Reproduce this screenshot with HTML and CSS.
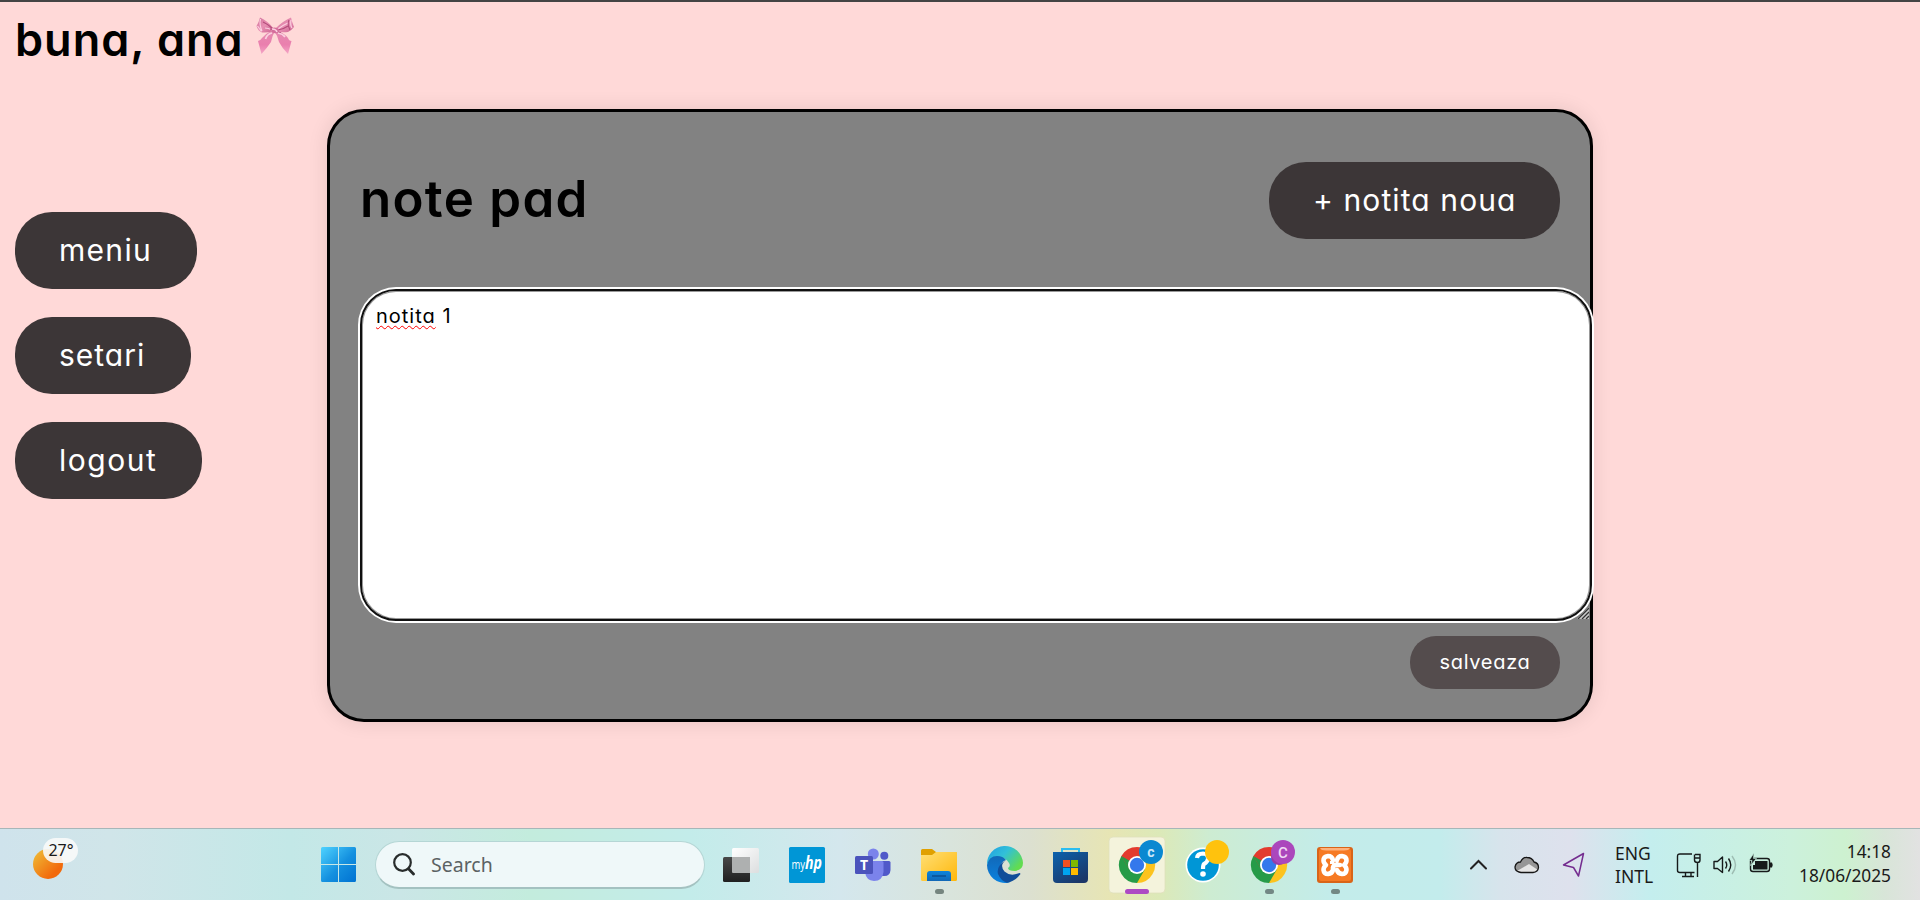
FILE: index.html
```html
<!DOCTYPE html>
<html lang="ro">
<head>
<meta charset="utf-8">
<title>note pad</title>
<link rel="stylesheet" href="styles.css">
</head>
<body>
<div class="page">
  <header class="greeting">
    <h1 class="hello">buna, ana</h1>
    <svg class="bow" viewBox="0 0 38 38">
      <defs>
        <linearGradient id="bowA" x1="0" y1="0" x2="1" y2="1"><stop offset="0" stop-color="#d07098"/><stop offset=".5" stop-color="#e88fb3"/><stop offset="1" stop-color="#cc6691"/></linearGradient>
        <linearGradient id="bowB" x1="0" y1="0" x2="0" y2="1"><stop offset="0" stop-color="#e58bb0"/><stop offset=".6" stop-color="#ea7fae"/><stop offset="1" stop-color="#f4a6c6"/></linearGradient>
      </defs>
      <path d="M15 14 Q9 17 6 21 Q4 24 2 24 L5.500 37 Q11 31 15 25 Q16 19 19 14Z" fill="url(#bowB)"/>
      <path d="M22 14 Q29 17 32 21 Q33 24 35.500 24 L32 37 Q26 31 23 25 Q22 19 18 14Z" fill="url(#bowB)"/>
      <path d="M17 11 Q12 4 4 0.500 Q3 5 0.500 9 Q2 14 6 15.500 Q12 16 17 14Z" fill="url(#bowA)"/>
      <path d="M20 11 Q27 4 35 0.500 Q36 5 38 10 Q35 14 32 15 Q25 16 20 14Z" fill="url(#bowA)"/>
      <path d="M4.500 2 Q3 7 6 14 M1.500 9 Q3 11 5.500 14.500 M9 11 Q12 11 16 13 M22 12 Q27 8 33 5.500 M35 3 Q34 8 36 11" fill="none" stroke="#fbcfe0" stroke-width="1.200"/>
      <path d="M7 5 Q12 7 17 12 M22 13 Q28 12 32 9 M14 12 L25 16 M33 3 Q31 7 34 13" fill="none" stroke="#b34c7a" stroke-width="1.100"/>
      <path d="M15.500 11 Q20 9.500 23 12 L21 16 Q18 17 16 15Z" fill="#d56f9c"/>
      <path d="M16 12 Q20 12 21 15 M16 16 Q11 17 9.500 22 M22 16 Q27 17 29 20" fill="none" stroke="#fbd0e0" stroke-width="1.700"/>
    </svg>
  </header>
  <div class="workspace">
    <nav class="menu">
      <button class="pill menu-meniu">meniu</button>
      <button class="pill menu-setari">setari</button>
      <button class="pill menu-logout">logout</button>
    </nav>
    <main class="card">
      <div class="card-head">
        <h2 class="card-title">note pad</h2>
        <button class="pill add-note">+ notita noua</button>
      </div>
      <div class="note">
        <svg class="grip" viewBox="0 0 12 12"><path d="M0 12L12 0V12Z" fill="#c9c9c9"/><path d="M1 12L12 1M5 12L12 5M9 12L12 9" stroke="#333" stroke-width="1.3"/></svg>
        <div class="note-text"><span class="misspelt">notita</span> 1</div>
      </div>
      <div class="card-foot"><button class="save">salveaza</button></div>
    </main>
  </div>
</div>
<footer class="taskbar">
  <div class="weather"><span class="sun"></span><span class="temp">27°</span></div>
  <svg class="start" viewBox="0 0 35 35">
    <defs><linearGradient id="win" x1="0" y1="0" x2="35" y2="35" gradientUnits="userSpaceOnUse"><stop offset="0" stop-color="#4fd3ff"/><stop offset=".55" stop-color="#1490df"/><stop offset="1" stop-color="#0072d2"/></linearGradient></defs>
    <path d="M1.5 0H17V17H0V1.5A1.5 1.5 0 0 1 1.500 0ZM18 0H33.500A1.500 1.500 0 0 1 35 1.500V17H18ZM0 18H17V35H1.500A1.500 1.500 0 0 1 0 33.500ZM18 18H35V33.500A1.500 1.500 0 0 1 33.500 35H18Z" fill="url(#win)"/>
  </svg>
  <div class="search">
    <svg class="lens" viewBox="0 0 22 23"><circle cx="9.500" cy="9.500" r="8.300" fill="none" stroke="#282c2c" stroke-width="2.200"/><path d="M15.500 15.800L20.500 21" stroke="#282c2c" stroke-width="2.800" stroke-linecap="round"/></svg>
    <span class="search-label">Search</span>
  </div>
  <div class="apps">
    <svg class="app" viewBox="0 0 66 72">
      <defs><linearGradient id="tvd" x1="0" y1="0" x2="0" y2="1"><stop offset="0" stop-color="#484848"/><stop offset="1" stop-color="#202020"/></linearGradient><linearGradient id="tvl" x1="0" y1="0" x2="1" y2="1"><stop offset="0" stop-color="#fff"/><stop offset="1" stop-color="#dcdedf"/></linearGradient></defs>
      <rect x="24" y="19" width="27" height="25" rx="1.500" fill="url(#tvl)"/>
      <rect x="15" y="28" width="27" height="25" rx="1.500" fill="url(#tvd)"/>
      <path d="M24 28H42V44H25Q24 44 24 43Z" fill="#aeb0b0"/>
    </svg>
    <svg class="app" viewBox="0 0 66 72">
      <rect x="15" y="18" width="36" height="36" rx="1.500" fill="#0096d6"/>
      <text x="17.500" y="39.500" class="hp-my" textLength="13.500" lengthAdjust="spacingAndGlyphs">my</text>
      <text x="31" y="40" class="hp-hp" textLength="17" lengthAdjust="spacingAndGlyphs">hp</text>
    </svg>
    <svg class="app" viewBox="0 0 66 72">
      <circle cx="44.300" cy="26.700" r="4" fill="#5059c9"/><path d="M40 32H49Q50.500 32 50.500 33.500V41Q50 47 44.500 47H40Z" fill="#5059c9"/>
      <circle cx="33.300" cy="25" r="5.500" fill="#7b83eb"/><path d="M25 32H42Q43.500 32 43.500 33.500V43Q42.500 52 34 52Q26 51.500 25 43Z" fill="#7b83eb"/>
      <rect x="15" y="27" width="18" height="18" rx="1.500" fill="#4b53bc"/><text x="24" y="41" class="teams-t">T</text>
    </svg>
    <svg class="app" viewBox="0 0 66 72">
      <defs><linearGradient id="fold" x1="0" y1="0" x2="1" y2="1"><stop offset="0" stop-color="#ffdf75"/><stop offset="1" stop-color="#ffb70a"/></linearGradient><linearGradient id="foldB" x1="0" y1="0" x2="0" y2="1"><stop offset="0" stop-color="#0d85dc"/><stop offset="1" stop-color="#1268b6"/></linearGradient></defs>
      <path d="M15 21.500Q15 20 16.500 20H26L30 23H49.500Q51 23 51 25V30H15Z" fill="#e0a000"/>
      <path d="M15 26H26L30 23H50Q51 23 51 24.500V50.500Q51 52 49.500 52H16.500Q15 52 15 50.500Z" fill="url(#fold)"/>
      <path d="M21 52V45Q21 42 24 42H42Q45 42 45 45V52Z" fill="url(#foldB)"/><path d="M26 47H40" stroke="#0b4f92" stroke-width="1.500"/>
      <rect x="29" y="60" width="9" height="5" rx="2.500" fill="#75857f"/>
    </svg>
    <svg class="app" viewBox="0 0 66 72">
      <defs><linearGradient id="edT" x1="0" y1="0" x2="1" y2=".6"><stop offset="0" stop-color="#1f9de4"/><stop offset=".5" stop-color="#32c0d8"/><stop offset="1" stop-color="#62dc50"/></linearGradient><linearGradient id="edL" x1="0" y1="0" x2="0" y2="1"><stop offset="0" stop-color="#1168b8"/><stop offset="1" stop-color="#0b82df"/></linearGradient></defs>
      <path d="M15 36A18 18 0 0 1 51 34Q51 41 43 42Q36 42 36 39Q39 37 37 34Q34 28 25 28Q18 28 15 36Z" fill="url(#edT)"/>
      <path d="M15 36Q17 27 25 27Q31 27 34 31Q28 33 28 40Q29 48 37 51Q40 53 36 53.700A18 18 0 0 1 15 36Z" fill="url(#edL)"/>
      <path d="M34 31Q24 37 26 45Q29 52 35 53.800Q43 52.500 48.500 45Q48 43.500 46 44.500Q38 47.500 32.500 42.500Q27 36 34 31Z" fill="#104d99"/>
    </svg>
    <svg class="app" viewBox="0 0 66 72">
      <defs><linearGradient id="store" x1="0" y1="0" x2=".7" y2="1"><stop offset="0" stop-color="#0b62ad"/><stop offset="1" stop-color="#1c3768"/></linearGradient></defs>
      <path d="M24 26V20H41V26" fill="none" stroke="#2bbdf0" stroke-width="2"/>
      <path d="M15 23H50V50Q50 54 46 54H19Q15 54 15 50Z" fill="url(#store)"/>
      <path d="M25 31h7v7h-7z" fill="#f25022"/><path d="M33 31h7v7h-7z" fill="#7fba00"/><path d="M25 39h7v7h-7z" fill="#00a4ef"/><path d="M33 39h7v7h-7z" fill="#ffb900"/>
    </svg>
    <svg class="app" viewBox="0 0 66 72">
      <rect x="5" y="8" width="56" height="56" rx="4" fill="#f4f3dc" stroke="#dfe0bb" stroke-width=".8"/>
      <g id="chrome"><path d="M33 36L17.400 27A18 18 0 0 1 48.600 27Z" fill="#e33b2e"/><path d="M33 36L48.600 27A18 18 0 0 1 33 54Z" fill="#fcc31e"/><path d="M33 36L40.800 40.500L33 54A18 18 0 0 1 17.400 27Z" fill="#269b48"/><path d="M33 27H48.600L40.800 40.500Z" fill="#fcc31e"/><path d="M17.400 27H48.600L33 27.500L25 40Z" fill="#e33b2e"/><path d="M17.400 27L25.200 40.500L33 36Z" fill="#269b48"/><circle cx="33" cy="36" r="9" fill="#fff"/><circle cx="33" cy="36" r="7.200" fill="#3478ec"/></g>
      <circle cx="47" cy="23" r="12" fill="#0a88d1"/><text x="47" y="27.500" class="badge-small">c</text>
      <rect x="21" y="60" width="24" height="5" rx="2.500" fill="#ad4ac4"/>
    </svg>
    <svg class="app" viewBox="0 0 66 72">
      <circle cx="33" cy="36" r="17.500" fill="#fff"/><circle cx="33" cy="36" r="15.800" fill="#0096d6"/>
      <path d="M27 29Q27.500 24.500 33 24.500Q38.500 25 38 30Q37.500 33 34 35Q33 36 33 40" fill="none" stroke="#fff" stroke-width="4.200"/><circle cx="33" cy="45" r="2.800" fill="#fff"/>
      <circle cx="47" cy="23" r="12" fill="#ffc20d"/>
    </svg>
    <svg class="app" viewBox="0 0 66 72">
      <use href="#chrome"/><circle cx="43" cy="28" r="8" fill="#963ca8"/><circle cx="47" cy="23" r="12" fill="#ab47bc"/><text x="47" y="28.500" class="badge-big">C</text>
      <rect x="29" y="60" width="9" height="5" rx="2.500" fill="#738884"/>
    </svg>
    <svg class="app" viewBox="0 0 66 72">
      <rect x="15" y="18" width="36" height="36" rx="3" fill="#d96418"/><rect x="17" y="20" width="32" height="32" rx="2" fill="#f67a24"/><path d="M18 19H48Q47 21.500 42 21.500H24Q19 21.500 18 19Z" fill="#ffb27d"/>
      <path d="M31 31Q30 27 26 27Q21.500 27.500 21.500 31.500Q21.500 34 24 36Q21.500 38 21.500 41Q22 45 26 45Q30 44.500 31 41V38.500Q31.500 36 34 36H38M35 31Q36 27 40 27Q44.500 27.500 44.500 31.500Q44.500 34 42 36Q44.500 38 44.500 41Q44 45 40 45Q36 44.500 35 41" fill="none" stroke="#fff" stroke-width="4.600" stroke-linecap="round" stroke-linejoin="round"/>
      <path d="M31 31V33.500H28M35 31V34" fill="none" stroke="#fff" stroke-width="3"/>
      <rect x="29" y="60" width="9" height="5" rx="2.500" fill="#738884"/>
    </svg>
  </div>
  <svg class="tray" viewBox="0 0 130 72" fill="none">
    <path d="M6 39.500L13.500 32L21 39.500" stroke="#222" stroke-width="2" stroke-linecap="round"/>
    <g transform="translate(4 0)">
      <path d="M50 43Q46 42 46 38Q47 33 51.500 33Q54 28 58 28.500Q63 28.500 65 33Q69.500 34 69.500 38.500Q69 43 64 43.500H52Z" fill="#969696"/>
      <path d="M48 42L60 35L69 41Q67 43.500 64 43.500H52Z" fill="#e5e5e5"/>
      <path d="M50 43Q46 42 46 38Q47 33 51.500 33Q54 28 58 28.500Q63 28.500 65 33Q69.500 34 69.500 38.500Q69 43 64 43.500H52Z" stroke="#161616" stroke-width="1.300"/>
      <path d="M114.500 24.500L94.500 36L104.500 38.500L109.500 47Z" stroke="#742c8f" stroke-width="1.500" stroke-linejoin="round"/>
    </g>
  </svg>
  <div class="lang"><span>ENG</span><span>INTL</span></div>
  <svg class="system" viewBox="0 0 100 72" fill="none" stroke="#161a1a" stroke-width="1.400">
    <path d="M17 25H5Q2.500 25 2.500 27.500V41.500Q2.500 43.500 5 43.500H19.500M7 47.500H19M10.500 44V47M16 44V47M22.500 34V48M20 25.500H25V31Q25 33.500 22.500 33.500Q19.500 33.500 19.500 31V25.500M20 29H25"/>
    <path d="M39 32.500H42.500L47.500 28V43.500L42.500 39.500H39Z" stroke-linejoin="round"/><path d="M50.500 32.500Q53 36 50.500 39.500M53.500 29.500Q58 36 53.500 42.500"/><path d="M57 27Q64 36 57 45" stroke="#9ebdb3"/>
    <rect x="75.500" y="29.500" width="19" height="13" rx="2.500"/><path d="M80 32H92.500V40.500H78V36H80Z" fill="#161a1a" stroke="none"/><path d="M95 33.500H97Q98.500 36 97 38.500H95Z" fill="#161a1a" stroke="none"/><path d="M79 24L74 31.500H77L75.500 36.500L81.500 29.500H78.500Z" fill="#161a1a" stroke="#c9efdf" stroke-width=".7"/>
  </svg>
  <div class="clock"><span>14:18</span><span>18/06/2025</span></div>
</footer>
</body>
</html>
```
FILE: styles.css
```css
* { box-sizing: border-box; }
body {
  margin: 0;
  width: 1920px;
  height: 900px;
  overflow: hidden;
  display: flex;
  flex-direction: column;
  background: #ffd9d8;
  font-family: Inter, "Open Sans", sans-serif;
  font-feature-settings: "cv11" 1;
  color: #000;
}
h1, h2 { margin: 0; white-space: nowrap; }
button {
  border: 0;
  padding: 0;
  font-family: inherit;
  font-feature-settings: inherit;
  color: #fff;
  white-space: nowrap;
}
.page { height: 828px; border-top: 2px solid #444; }
.greeting { height: 107px; padding: 8px 0 0 15px; display: flex; align-items: flex-start; }
.hello { width: 241px; font-size: 45px; line-height: 60px; font-weight: 600; letter-spacing: 1px; }
.bow { width: 38px; height: 38px; margin-top: 7px; }

.workspace { display: flex; }
.menu {
  width: 327px;
  padding: 103px 0 0 15px;
  display: flex;
  flex-direction: column;
  align-items: flex-start;
  gap: 28px;
}
.pill {
  height: 77px;
  padding: 0 0 2px 44px;
  border-radius: 37px;
  background: #3c3637;
  font-size: 30px;
  font-weight: 400;
  text-align: left;
}
.menu-meniu { width: 182px; letter-spacing: 1.3px; }
.menu-setari { width: 176px; letter-spacing: 1px; }
.menu-logout { width: 187px; letter-spacing: 1.5px; }
.add-note { width: 291px; letter-spacing: 1.1px; }

.card {
  isolation: isolate;
  width: 1266px;
  height: 613px;
  padding: 50px 30px 0;
  border: 3px solid #000;
  border-radius: 37px;
  background: #828282;
  box-shadow: 0 0 20px rgba(0, 0, 0, .1);
}
.card-head { height: 77px; display: flex; align-items: center; justify-content: space-between; }
.card-title { font-size: 51px; line-height: 60px; font-weight: 600; letter-spacing: 1.3px; padding-bottom: 4px; }
.note {
  position: relative;
  width: 1232px;
  height: 332px;
  margin-top: 50px;
  padding: 12px 14px;
  border: 2px solid #101010;
  border-radius: 36px;
  background: #fff;
  box-shadow: 0 0 0 2px #fff, inset 0 0 0 1px #999;
}
.note-text { font-size: 20px; line-height: 26px; font-weight: 400; letter-spacing: 1px; }
.misspelt { text-decoration: underline wavy #f00 1.3px; text-underline-offset: 2px; text-decoration-skip-ink: none; }
.grip { position: absolute; right: 1px; bottom: 0; width: 12px; height: 12px; z-index: -1; }
.card-foot { display: flex; justify-content: flex-end; margin-top: 15px; }
.save { width: 150px; height: 53px; padding-bottom: 1px; border-radius: 26px; background: #544c4d; font-size: 20px; font-weight: 400; letter-spacing: .7px; }

.taskbar {
  height: 72px;
  display: flex;
  align-items: center;
  border-top: 1px solid #a7b6b8;
  font-family: "Noto Sans", "Open Sans", sans-serif;
  font-feature-settings: normal;
  color: #1a1a1a;
  background: linear-gradient(90deg, #cfe3ec 0, #d0e5e9 110px, #c3e8e7 290px, #cae6e6 400px, #c3ecdd 530px, #c3ecea 690px, #d4e7ed 840px, #d9e4dc 950px, #dce0d0 1030px, #e7e5b4 1110px, #dce9b8 1160px, #cdecd2 1210px, #c3ecea 1330px, #c3ecec 1440px, #d7e4ec 1500px, #dee1ed 1570px, #c4eeee 1650px, #ccf1dc 1790px, #cdf1d0 1845px, #d8e5d8 1885px, #e2e2e2 1920px);
}
.weather { position: relative; width: 321px; height: 72px; flex: none; }
.sun { position: absolute; left: 33px; top: 20px; width: 30px; height: 30px; border-radius: 50%; background: linear-gradient(135deg, #efb633 10%, #f26a0c 75%); }
.temp { position: absolute; left: 43px; top: 9px; width: 35px; height: 25px; border-radius: 13px; background: rgba(248, 249, 249, .9); font-size: 16px; line-height: 24px; text-align: center; padding-left: 1px; }
.start { width: 35px; height: 35px; flex: none; }
.search {
  width: 330px;
  height: 48px;
  margin: 0 3px 0 19px;
  padding-left: 17px;
  flex: none;
  display: flex;
  align-items: center;
  border: 1px solid #b5d6d5;
  border-bottom: 2px solid #a4c2c1;
  border-radius: 24px;
  background: #eff8f9;
}
.lens { width: 22px; height: 23px; }
.search-label { margin-left: 16px; font-size: 19.5px; color: #5b6263; }
.apps { display: flex; height: 72px; }
.app { width: 66px; height: 72px; flex: none; }
.hp-my { font: 12px "Open Sans", sans-serif; fill: #fff; }
.hp-hp { font: italic bold 18px "Open Sans", sans-serif; fill: #fff; }
.teams-t { font: bold 14px "Open Sans", sans-serif; fill: #fff; text-anchor: middle; }
.badge-small { font: bold 14px Roboto, sans-serif; fill: #cbe7f8; text-anchor: middle; }
.badge-big { font: 500 15px Roboto, sans-serif; fill: #f0daf4; text-anchor: middle; }
.tray { width: 130px; height: 72px; margin-left: 97px; flex: none; }
.lang { display: flex; flex-direction: column; width: 80px; padding-left: 20px; font-size: 17.5px; line-height: 23px; }
.system { width: 100px; height: 72px; flex: none; }
.clock { display: flex; flex-direction: column; width: 116px; text-align: right; font-size: 17.3px; line-height: 24px; padding-bottom: 2px; }
```
